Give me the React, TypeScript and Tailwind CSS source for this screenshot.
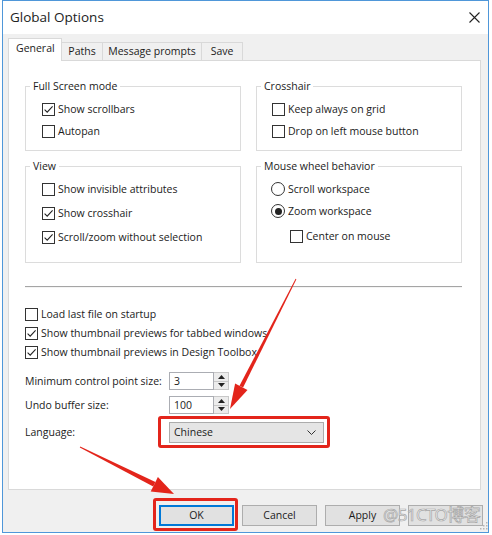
import React from "react";

function Box({ checked }: { checked?: boolean }) {
  return (
    <span className="w-[13px] h-[13px] border border-[#333333] bg-white flex items-center justify-center shrink-0">
      {checked && (
        <svg width="11" height="11" viewBox="0 0 11 11">
          <path d="M1.6 5.6 L4.2 8.2 L9.6 2.4" stroke="#222" strokeWidth="1.1" fill="none" />
        </svg>
      )}
    </span>
  );
}

function Check({ label, checked, h = "h-[22px]" }: { label: string; checked?: boolean; h?: string }) {
  return (
    <div className={`flex items-center gap-[3px] ${h}`}>
      <Box checked={checked} />
      <span className="whitespace-nowrap leading-none">{label}</span>
    </div>
  );
}

function Radio({ label, checked }: { label: string; checked?: boolean }) {
  return (
    <div className="flex items-center gap-[3px] h-[22px]">
      <span className="w-[14px] h-[14px] rounded-full border border-[#333333] bg-white flex items-center justify-center shrink-0">
        {checked && <span className="w-[7px] h-[7px] rounded-full bg-[#222222]" />}
      </span>
      <span className="whitespace-nowrap leading-none">{label}</span>
    </div>
  );
}

function Group({ title, h, children }: { title: string; h: string; children: React.ReactNode }) {
  return (
    <div className={`border border-[#dcdcdc] ${h} flex flex-col`}>
      <div className="-mt-[9px] ml-[4px] px-[3px] bg-white w-fit h-[16px] flex items-center leading-none whitespace-nowrap">
        {title}
      </div>
      {children}
    </div>
  );
}

function Spin({ value }: { value: string }) {
  return (
    <div className="flex h-[18px]">
      <div className="w-[45px] h-[18px] border border-[#abadb3] bg-white flex items-center pl-[4px] leading-none">
        {value}
      </div>
      <div className="w-[15px] h-[18px] flex flex-col border border-l-0 border-[#c8c8c8] bg-[#ececec]">
        <div className="flex-1 flex items-center justify-center border-b border-[#c8c8c8]">
          <svg width="7" height="4" viewBox="0 0 7 4"><path d="M0 4 L3.5 0 L7 4Z" fill="#222" /></svg>
        </div>
        <div className="flex-1 flex items-center justify-center">
          <svg width="7" height="4" viewBox="0 0 7 4"><path d="M0 0 L3.5 4 L7 0Z" fill="#222" /></svg>
        </div>
      </div>
    </div>
  );
}

function Btn({ label, primary }: { label?: string; primary?: boolean }) {
  return (
    <div
      className={`w-[75px] h-[21px] flex items-center justify-center bg-[#e1e1e1] leading-none ${
        primary ? "border-2 border-[#0078d7]" : "border border-[#adadad]"
      }`}
    >
      {label}
    </div>
  );
}

export default function App() {
  return (
    <div className="w-[492px] h-[535px] bg-white relative overflow-hidden font-['Segoe_UI','Open_Sans',sans-serif] text-[10.5px] text-[#1b1b1b]">
      <div className="ml-[2px] w-[487px] h-[533px] border border-[#4f97d9] bg-[#f0f0f0] flex flex-col">
        {/* title bar */}
        <div className="h-[33px] bg-white flex items-center justify-between pl-[7px] pr-[8px] shrink-0">
          <span className="text-[13.5px] text-[#222] leading-none">Global Options</span>
          <svg width="11" height="11" viewBox="0 0 11 11">
            <path d="M0.5 0.5 L10.5 10.5 M10.5 0.5 L0.5 10.5" stroke="#222" strokeWidth="1.1" />
          </svg>
        </div>

        {/* tabs */}
        <div className="h-[26px] flex items-end pl-[5px] shrink-0">
          <div className="relative z-10 w-[54px] h-[23px] -mb-px bg-white border border-b-0 border-[#d9d9d9] flex items-start pt-[4px] pl-[7px] leading-none">
            General
          </div>
          <div className="w-[42px] h-[18px] -ml-px border border-b-0 border-[#d9d9d9] flex items-center justify-center leading-none">
            Paths
          </div>
          <div className="w-[100px] h-[18px] -ml-px border border-b-0 border-[#d9d9d9] flex items-center justify-center leading-none">
            Message prompts
          </div>
          <div className="w-[42px] h-[18px] -ml-px border border-b-0 border-[#d9d9d9] flex items-center justify-center leading-none">
            Save
          </div>
        </div>

        {/* panel */}
        <div className="ml-[5px] w-[473px] h-[430px] border border-[#d9d9d9] bg-white pl-[16px] pt-[25px] shrink-0">
          <div className="grid grid-cols-[216px_206px] gap-x-[15px] gap-y-[15px]">
            <Group title="Full Screen mode" h="h-[65px]">
              <div className="pl-[16px] pt-[4px]">
                <Check label="Show scrollbars" checked />
                <Check label="Autopan" />
              </div>
            </Group>
            <Group title="Crosshair" h="h-[65px]">
              <div className="pl-[15px] pt-[4px]">
                <Check label="Keep always on grid" />
                <Check label="Drop on left mouse button" />
              </div>
            </Group>
            <Group title="View" h="h-[97px]">
              <div className="pl-[16px] pt-[3px]">
                <Check label="Show invisible attributes" h="h-[24px]" />
                <Check label="Show crosshair" checked h="h-[24px]" />
                <Check label="Scroll/zoom without selection" checked h="h-[24px]" />
              </div>
            </Group>
            <Group title="Mouse wheel behavior" h="h-[97px]">
              <div className="pl-[14px] pt-[4px]">
                <Radio label="Scroll workspace" />
                <Radio label="Zoom workspace" checked />
                <div className="pl-[19px] mt-[3px]">
                  <Check label="Center on mouse" />
                </div>
              </div>
            </Group>
          </div>

          <div className="mt-[23px] w-[437px] h-[2px] border-t border-[#a5a5a5] border-b border-b-[#f4f4f4]" />

          <div className="mt-[17px]">
            <Check label="Load last file on startup" h="h-[19px]" />
            <Check label="Show thumbnail previews for tabbed windows" checked h="h-[19px]" />
            <Check label="Show thumbnail previews in Design Toolbox" checked h="h-[19px]" />
          </div>

          <div className="mt-[9px] flex items-center h-[20px]">
            <span className="w-[144px] leading-none">Minimum control point size:</span>
            <Spin value="3" />
          </div>
          <div className="mt-[4px] flex items-center h-[20px]">
            <span className="w-[144px] leading-none">Undo buffer size:</span>
            <Spin value="100" />
          </div>
          <div className="mt-[6px] flex items-center h-[22px]">
            <span className="w-[144px] leading-none">Language:</span>
            <div className="w-[155px] h-[21px] border border-[#acacac] bg-[#e5e5e5] flex items-center justify-between pl-[4px] pr-[7px] leading-none">
              <span>Chinese</span>
              <svg width="9" height="5" viewBox="0 0 9 5">
                <path d="M0.5 0.5 L4.5 4.5 L8.5 0.5" stroke="#333" strokeWidth="1" fill="none" />
              </svg>
            </div>
          </div>
        </div>

        {/* footer */}
        <div className="flex-1 flex items-start justify-end pr-[5px] pt-[15px] gap-[8px]">
          <Btn label="OK" primary />
          <Btn label="Cancel" />
          <Btn label="Apply" />
          <Btn />
        </div>
      </div>

      {/* watermark */}
      <div className="absolute left-[383px] top-[506px] text-[17px] leading-none text-[#f4f4f4] [-webkit-text-stroke:0.7px_#a6a6a6] font-['Noto_Sans','Noto_Sans_CJK_SC',sans-serif] whitespace-nowrap tracking-[-0.6px]">
        @51CTO博客
      </div>

      {/* resize grip */}
      <svg className="absolute left-[479px] top-[521px]" width="10" height="10" viewBox="0 0 10 10">
        <rect x="7" y="1" width="1.5" height="1.5" fill="#b5b5b5" />
        <rect x="4" y="4" width="1.5" height="1.5" fill="#b5b5b5" />
        <rect x="7" y="4" width="1.5" height="1.5" fill="#b5b5b5" />
        <rect x="1" y="7" width="1.5" height="1.5" fill="#b5b5b5" />
        <rect x="4" y="7" width="1.5" height="1.5" fill="#b5b5b5" />
        <rect x="7" y="7" width="1.5" height="1.5" fill="#b5b5b5" />
      </svg>

      {/* red annotation boxes */}
      <div className="absolute left-[158px] top-[416px] w-[172px] h-[32px] border-[3px] border-[#e3251b] rounded-[3px]" />
      <div className="absolute left-[153px] top-[498px] w-[85px] h-[33px] border-[3px] border-[#e3251b] rounded-[3px]" />

      {/* arrows */}
      <svg className="absolute left-0 top-0 pointer-events-none" width="492" height="535" viewBox="0 0 492 535">
        <polygon points="295.6,278.8 296.4,279.2 243.1,387.6 239.5,385.8" fill="#e3251b" />
        <polygon points="230,409 235.1,383.5 247.5,389.9" fill="#e3251b" />
        <polygon points="79.8,447.5 80.2,446.5 155.4,482 153.2,486.4" fill="#e3251b" />
        <polygon points="174,494 150.7,491.4 157.9,477" fill="#e3251b" />
      </svg>
    </div>
  );
}
